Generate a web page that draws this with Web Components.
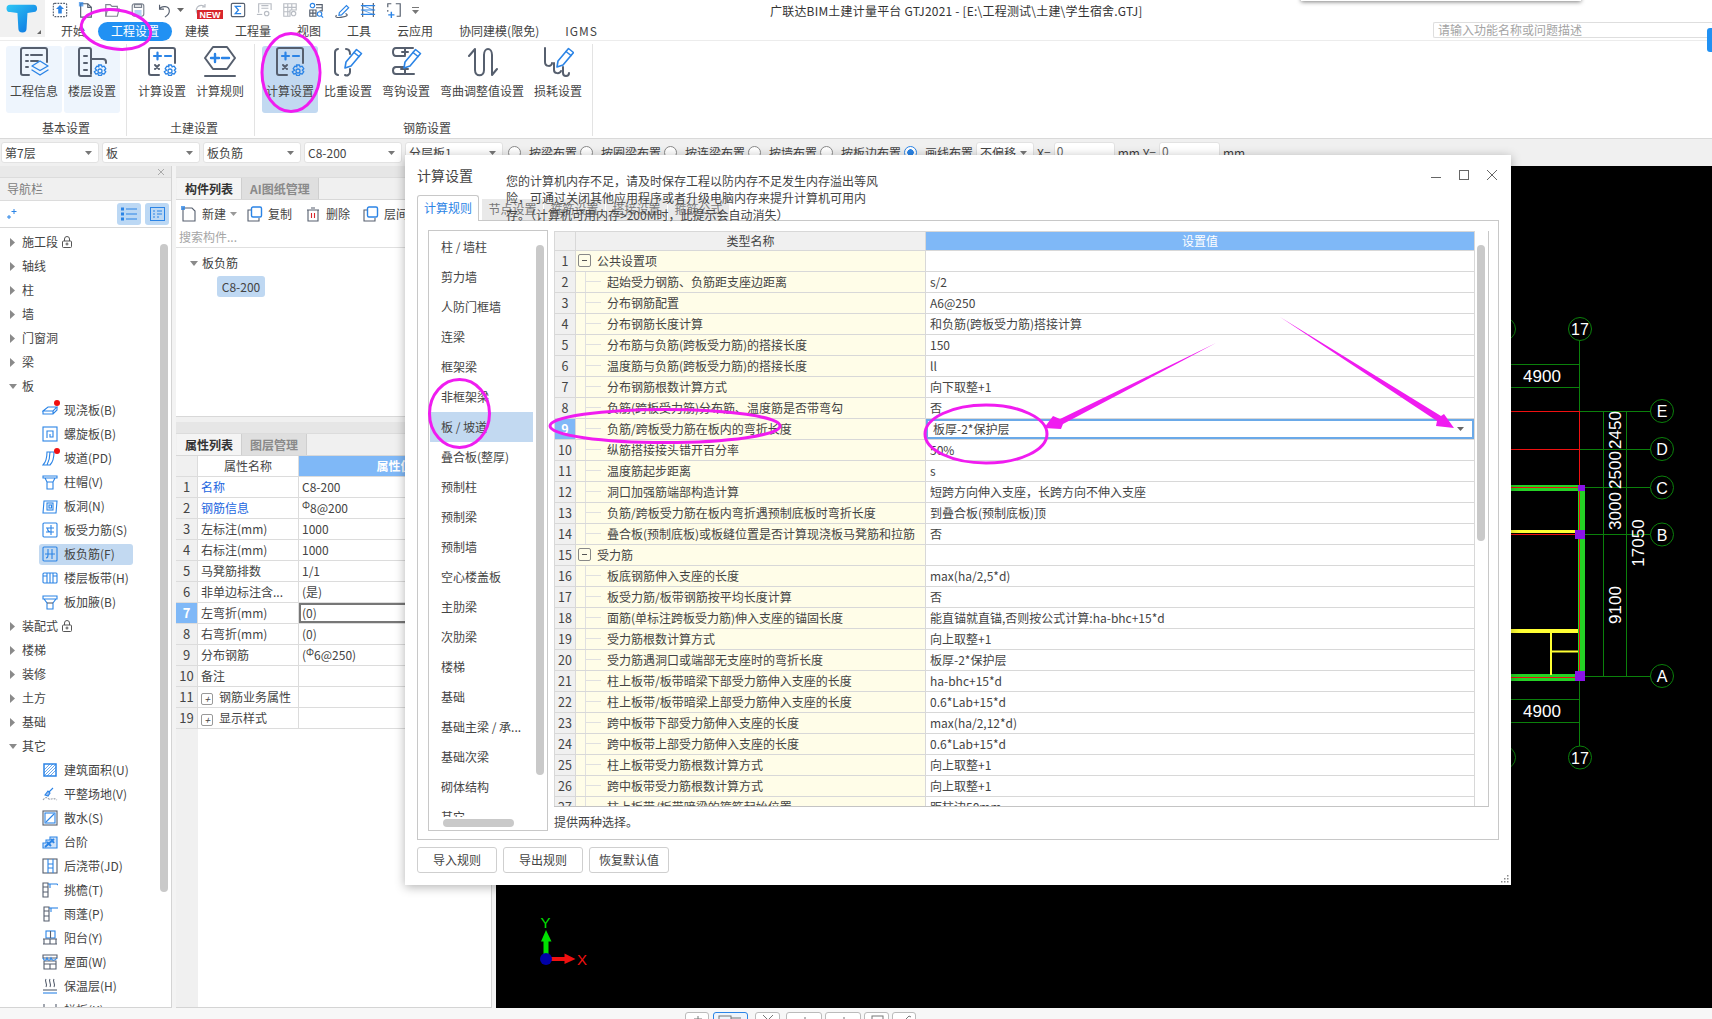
<!DOCTYPE html>
<html lang="zh-CN">
<head>
<meta charset="utf-8">
<title>GTJ2021</title>
<style>
html,body{margin:0;padding:0;width:1712px;height:1019px;overflow:hidden;background:#f3f3f3}
body{font:12px/16px "Noto Sans CJK SC","Noto Sans",sans-serif;color:#3f3f3f}
</style>
</head>
<body>
<gtj-app></gtj-app>
<script>
const B='#2b84e6',G='#565f6e',LG='#b9bdc4';
function el(name,css,render){
  customElements.define(name,class extends HTMLElement{
    constructor(){super();this.attachShadow({mode:'open'})}
    connectedCallback(){this.shadowRoot.innerHTML='<style>'+css+'</style>'+render(this)}
  });
}
const tri=(c='#888')=>`<svg width="7" height="4" viewBox="0 0 7 4"><path d="M0 0h7L3.500 4z" fill="${c}"/></svg>`;

/* ---------- quick access icons ---------- */
const q=(b)=>`<svg width="16" height="16" viewBox="0 0 18 18" fill="none" stroke="${G}" stroke-width="1.300">${b}</svg>`;
const QUICK=[
 q(`<rect x="1.500" y="1.500" width="15" height="15" rx="1.500" stroke-dasharray="2 1.200"/><path d="M9 3.500l4.500 4.500H11v5H7V8H4.500z" fill="${B}" stroke="none"/>`),
 q(`<path d="M3 2h8l4 4v11H3z"/><path d="M11 2v4h4"/><rect x="1" y="0" width="5" height="5" fill="${B}" stroke="none" opacity=".7"/>`),
 q(`<path d="M2 16V3h5l2 2h6v3" stroke="#7d8490"/><path d="M2 16l2-8h13l-2 8z" stroke="#7d8490"/>`),
 q(`<rect x="2.500" y="2" width="13" height="14" rx="2.500" stroke="#7d8490"/><path d="M5 3h8v3H5z" stroke="#7d8490"/><rect x="5" y="9" width="8" height="7" fill="#b6d4f4" stroke="none"/>`),
 q(`<path d="M4 3v5h5"/><path d="M4 8c2-4 11-4 11 2 0 3-2 5-5 7"/>`),
 `<span style="width:12px;margin-left:-3px;display:flex;justify-content:center">${tri('#666')}</span>`,
 `<span style="width:39px;display:flex;justify-content:flex-start;padding-left:8px;box-sizing:border-box"><svg width="14" height="14" viewBox="0 0 14 14" fill="none" stroke="${LG}" stroke-width="1.200"><path d="M11 4A5 5 0 1 0 12 9M11 1v3H8"/></svg></span>`,
 q(`<rect x="1.500" y="1.500" width="15" height="15" rx="1.500"/><path d="M12.500 5H6l3.500 4L6 13h6.500" stroke="${B}" stroke-width="1.500"/>`),
 q(`<path d="M3 12V2h14v7M6 4h8M6 7h8" stroke="${LG}"/><path d="M1 14h6" stroke="${LG}"/><circle cx="12" cy="13" r="2.500" stroke="${LG}"/>`),
 q(`<path d="M2 2h14v7H9v7H2zM2 6h14M2 11h7M6.500 2v14M11 2v7" stroke="${LG}"/><circle cx="13" cy="13" r="2.500" stroke="${LG}"/>`),
 q(`<path d="M2 9h7v7H2zM2 12.500h7M5.500 9v7M9 3h7v7h-3M9 6.500h7"/><circle cx="5" cy="4" r="2.500" stroke="${B}"/><circle cx="13" cy="13.500" r="2.500" stroke="${B}"/><path d="M15 15.500l2 2" stroke="${B}"/>`),
 q(`<path d="M3 15c-3 2 1 3 6 2s8-2 4-4" stroke="${G}"/><path d="M6 12l8-8 2.500 2.500-8 8-3 .5z" stroke="${B}"/>`),
 q(`<path d="M3 1v16M15 1v16" stroke="${G}"/><path d="M1 4h16M1 9h16M1 14h16" stroke="${B}"/><path d="M3 4l12 5M3 9l12 5" stroke="${B}" stroke-width=".8"/>`),
 q(`<path d="M2 6V2h4M11 2h5v14h-4M2 9v2" /><path d="M6 11v7M2.500 14.500h7" stroke="${B}" stroke-width="1.600"/>`),
];
el('quick-bar',`:host{display:flex;height:21px;align-items:center;position:relative;padding-bottom:1px;box-sizing:border-box}
 .c{width:26px;display:flex;justify-content:center;flex:none}
 .new{position:absolute;left:150px;top:10px;width:26px;height:9px;background:#d8262c;color:#fff;font:700 9px/10px "Liberation Sans",sans-serif;text-align:center}
 .more{width:16px;display:flex;flex-direction:column;align-items:center;gap:2px}
 .more b{display:block;width:7px;border-top:1px solid #777}`,
 ()=>QUICK.map(i=>i.startsWith('<span')?i:`<span class="c">${i}</span>`).join('')+`<span class="more"><b></b>${tri('#777')}</span><span class="new">NEW</span>`);

/* ---------- title + tabs ---------- */
el('tab-strip',`:host{display:flex;height:19px;align-items:flex-start;color:#444;margin-left:1px}
 span{padding:0 13px 1px;line-height:18px;white-space:nowrap}
 .on{background:#2191f3;color:#fff;border-radius:10px}
 .lat{letter-spacing:1px}`,
 ()=>['开始','工程设置','建模','工程量','视图','工具','云应用','协同建模(限免)','IGMS'].map((t,i)=>`<span class="${i==1?'on':i==8?'lat':''}">${t}</span>`).join(''));

el('gtj-header',`:host{display:flex;height:40px;border-bottom:1px solid #ececec;background:#fff;position:relative}
 .logo{width:45px;height:37px;background:#f1f1f1;position:relative;flex:none}
 .logo svg{display:block;margin:2px 0 0 5px}
 .corner{position:absolute;right:4px;bottom:3px;width:0;height:0;border-left:4px solid transparent;border-bottom:4px solid #666}
 .col{flex:1;padding-left:2px;min-width:0}
 .tabs{display:flex;align-items:center;height:19px;margin-top:1px}
 .search{margin-left:auto;width:279px;height:16px;box-sizing:border-box;border:1px solid #dedede;border-right:0;border-radius:2px 0 0 2px;color:#a4a4a4;padding-left:4px;line-height:14px;font-size:12px;margin-top:-3px}
 .title{position:absolute;left:770px;top:3px;white-space:nowrap;color:#333;font-size:12px;line-height:16px;letter-spacing:.2px}
 .pop{position:absolute;left:1301px;top:-6px;width:280px;height:7px;background:#fff;box-shadow:0 1px 4px rgba(0,0,0,.5)}
 .blue{position:absolute;right:0;top:28px;width:5px;height:24px;background:#2191f3;border-radius:3px 0 0 3px;z-index:3}`,
 ()=>`<div class="logo"><svg width="34" height="31" viewBox="0 0 36 34"><defs><linearGradient id="t" x1="0" y1="0" x2="1" y2="1"><stop offset="0" stop-color="#2fc7f5"/><stop offset="1" stop-color="#0a6fe0"/></linearGradient></defs><path d="M5 3h25a4 4 0 0 1 1 8l-7 1-1 17a4.500 4.500 0 0 1-9 0l-1-17-8-1a4 4 0 0 1 0-8z" fill="url(#t)"/></svg><i class="corner"></i></div>
 <div class="col"><quick-bar></quick-bar><div class="tabs"><tab-strip></tab-strip><div class="search">请输入功能名称或问题描述</div></div></div>
 <div class="title">广联达BIM土建计量平台 GTJ2021 - [E:\\工程测试\\土建\\学生宿舍.GTJ]</div><div class="pop"></div><i class="blue"></i>`);

/* ---------- ribbon ---------- */
const r=(b)=>`<svg width="32" height="32" viewBox="0 0 32 32" fill="none" stroke="${G}" stroke-width="2" stroke-linecap="round" stroke-linejoin="round">${b}</svg>`;
const gear=(x,y,s=1)=>`<g transform="translate(${x} ${y}) scale(${s})" stroke="${B}"><circle r="2" stroke-width="1.300"/><path stroke-width="1.300" d="M-1.500-6h3l.6 2 2-.8 1.700 2.500-1.500 1.500 1.500 1.500-1.700 2.500-2-.8-.6 2h-3l-.6-2-2 .8-1.700-2.500L-3.300-.8-4.800-2.300l1.700-2.500 2 .8z"/></g>`;
const pencil=(dx,dy)=>`<g transform="translate(${dx} ${dy})" stroke="${B}" stroke-width="1.600"><path d="M0 20l1-6L11.500 1.500l5 4L6 18z"/><path d="M9 4.500l5 4"/></g>`;
const calc=`<path d="M13 29H5a2 2 0 0 1-2-2V4a2 2 0 0 1 2-2h22a2 2 0 0 1 2 2v13"/><path d="M8 10h7M11.500 6.500v7M19 10h6" stroke="${B}" stroke-width="2.200"/><path d="M9 19l4 4M13 19l-4 4" stroke-width="2"/>`+gear(24,25);
const RI={
 info:r(`<path d="M11 29H5a2 2 0 0 1-2-2V4a2 2 0 0 1 2-2h22a2 2 0 0 1 2 2v12"/><path d="M8 9h2M13 9h11M8 15h2M13 15h7M8 21h2"/><path d="M22 15l8 5-8 4.500-8-4.500z" stroke="${B}" stroke-width="1.400"/><path d="M14 24l8 5 8-5" stroke="${B}" stroke-width="1.400"/>`),
 floor:r(`<path d="M5 30a2 2 0 0 1-2-2V4a2 2 0 0 1 2-2h8a2 2 0 0 1 2 2v24M15 30H5M8 10h3M8 17h3M8 24h3"/><path d="M15 13h12a3 3 0 0 1 3 3v1"/>`+gear(24,25)),
 calc:r(calc),
 rule:r(`<path d="M9 1h14l8 11-8 11H9L1 12z"/><path d="M7 12h8M11 8v8M18 12h7" stroke="${B}" stroke-width="2.400"/><path d="M1 30h30"/>`),
 weight:r(`<path d="M6 3a3.500 3.500 0 0 0-3 3.500v19A3.500 3.500 0 0 0 6 29"/><path d="M14 3c3 0 4 2 4 5M18 23v3c0 3-3 4-5 3"/>`+pencil(13,2)),
 hook:r(`<path d="M23 2H6c-4 0-4 8 0 8h9M15 2v7M12 6h6M14 21H6c-4 0-4 7 0 7h18M15 22v6M11 23h7"/>`+pencil(14,2)),
 bend:r(`<path d="M3 10l6-7v21c0 7 9 7 9 0V9c0-8 8-8 8 0v20l5-6"/>`),
 loss:r(`<path d="M3 2v14c0 5 7 5 7 1M12 17v7c0 4 6 4 7 1M21 21v6c0 4 6 4 6 0"/>`+pencil(15,1))
};
el('ribbon-btn',`:host{display:block;width:56px;height:67px;border-radius:3px;text-align:center;flex:none}
 :host([wide]){width:92px}
 :host([soft]){background:#eef5fd}
 :host([active]){background:#c2d9f1}
 .i{height:34px;padding-top:0;box-sizing:border-box;display:flex;justify-content:center}
 .t{margin-top:2px;white-space:nowrap;line-height:18px;color:#454545;font-size:12px}`,
 h=>`<div class="i">${RI[h.getAttribute('icon')]}</div><div class="t">${h.getAttribute('label')}</div>`);
el('ribbon-group',`:host{display:flex;flex-direction:column;border-right:1px solid #e3e3e3;box-sizing:border-box;height:92px;margin-top:3px;padding-top:2px}
 .b{display:flex;gap:2px;height:67px}
 .l{margin-top:8px;text-align:center;line-height:14px;color:#454545}`,
 h=>`<div class="b"><slot></slot></div><div class="l">${h.getAttribute('label')}</div>`);
el('gtj-ribbon',`:host{display:flex;height:98px;background:#fff;border-bottom:1px solid #d9d9d9;box-sizing:border-box}
 ribbon-group{flex:none}
 .g1{width:127px;padding-left:6px}.g2{width:128px;padding-left:7px}.g3{width:338px;padding-left:7px}`,
 ()=>`<ribbon-group class="g1" label="基本设置"><ribbon-btn soft icon="info" label="工程信息"></ribbon-btn><ribbon-btn soft icon="floor" label="楼层设置"></ribbon-btn></ribbon-group>
 <ribbon-group class="g2" label="土建设置"><ribbon-btn icon="calc" label="计算设置"></ribbon-btn><ribbon-btn icon="rule" label="计算规则"></ribbon-btn></ribbon-group>
 <ribbon-group class="g3" label="钢筋设置"><ribbon-btn active icon="calc" label="计算设置"></ribbon-btn><ribbon-btn icon="weight" label="比重设置"></ribbon-btn><ribbon-btn icon="hook" label="弯钩设置"></ribbon-btn><ribbon-btn wide icon="bend" label="弯曲调整值设置"></ribbon-btn><ribbon-btn icon="loss" label="损耗设置"></ribbon-btn></ribbon-group>`);

/* ---------- options toolbar ---------- */
el('combo-box',`:host{display:flex;align-items:center;justify-content:space-between;box-sizing:border-box;width:98px;height:21px;background:#fff;border:1px solid #e2e2e2;border-radius:3px;padding:0 6px 0 3px;flex:none;color:#444}`,
 h=>`<span>${h.getAttribute('text')}</span>${tri('#777')}`);
el('radio-opt',`:host{display:flex;align-items:center;flex:none;white-space:nowrap;color:#444}
 i{display:block;width:13px;height:13px;border:1px solid #888;border-radius:50%;box-sizing:border-box;margin-right:8px;background:#fff}
 :host([on]) i{border-color:#2b84e6;background:radial-gradient(circle,#2b84e6 0 3px,#fff 3.500px)}`,
 h=>`<i></i>${h.getAttribute('text')}`);
el('gtj-options',`:host{display:flex;align-items:center;height:27px;background:#f0f0f0;padding-left:1px;gap:3px;box-sizing:border-box}
 .n{width:61px;height:21px;background:#fff;border:1px solid #e2e2e2;border-radius:3px;box-sizing:border-box;padding-left:2px;flex:none;color:#666}
 .first{margin-left:2px}`,
 ()=>`<combo-box text="第7层"></combo-box><combo-box text="板"></combo-box><combo-box text="板负筋"></combo-box><combo-box text="C8-200"></combo-box><combo-box text="分层板1"></combo-box>
 ${['按梁布置','按圈梁布置','按连梁布置','按墙布置','按板边布置'].map((t,i)=>`<radio-opt class="${i?'':'first'}" text="${t}"></radio-opt>`).join('')}<radio-opt on text="画线布置"></radio-opt>
 <combo-box style="width:58px" text="不偏移"></combo-box><span>X=</span><span class="n">0</span><span>mm</span><span>Y=</span><span class="n">0</span><span>mm</span>`);

/* ---------- navigation tree ---------- */
const n=(b)=>`<svg width="16" height="16" viewBox="0 0 16 16" fill="none" stroke="${B}" stroke-width="1.100">${b}</svg>`;
const NI={
 slab:n(`<path d="M1 9h10l4-4H6z"/><path d="M1 9v3h10l4-4V5M11 9v3"/>`),
 spiral:n(`<rect x="1" y="1" width="14" height="14"/><path d="M5 12V5h6v6H8V8"/>`),
 ramp:n(`<path d="M1 15c3-3 4-8 4-13h7c0 5-1 10-4 13zM5 15c2-4 3-9 3-13" />`),
 cap:n(`<path d="M1 2h14v2H1zM3 4l2 4h6l2-4M5 8v7h6V8" />`),
 hole:n(`<path d="M2 3h13l-1 12H1z"/><rect x="5" y="5" width="6" height="7"/><rect x="7" y="7" width="2.500" height="3"/>`),
 rebar:n(`<rect x="1" y="1" width="14" height="14" rx="1"/><path d="M4 6h8M4 10h8M9 3v10M6 6c-1 2 0 3 2 4"/>`),
 neg:n(`<rect x="1" y="1" width="14" height="14" rx="1"/><path d="M3 8h10M6 3v6c0 2-1 3-2 3M10 3v10"/>`),
 band:n(`<rect x="1" y="3" width="14" height="10" rx="1"/><path d="M5 3v10M8 3v10M11 3v10M1 6h4M11 6h4"/>`),
 haunch:n(`<path d="M1 2h14v3H1zM2 5l3 4v6h6V9l3-4"/><path d="M5 9h6" stroke="${G}"/>`),
 area:n(`<rect x="2" y="2" width="12" height="12" stroke-width="1.500"/><path d="M2 8l6-6M2 11l9-9M2 14L14 2M5 14l9-9M8 14l6-6" stroke-width=".7"/>`),
 site:n(`<path d="M5 8l6-6" /><path d="M3 9l3 1 2-3-2-2z" fill="#9dbff0"/><path d="M1 14c3-4 4-2 6-1s4-2 8 1" stroke="#9aa1ab" stroke-dasharray="2 1"/>`),
 apron:n(`<rect x="1" y="1" width="14" height="14" stroke="${G}"/><rect x="3" y="3" width="10" height="10"/><path d="M4 12l8-8"/>`),
 step:n(`<path d="M1 14V9h3V6h4V3h7v11z" fill="#cfe2f9"/><path d="M3 13l9-8M5 8l4 4M9 5l3 4" stroke-width="2"/>`),
 post:n(`<rect x="1" y="1" width="14" height="14" stroke="${G}"/><path d="M6 1v14M11 1v14M6 6h5M6 10h5"/>`),
 eave:n(`<path d="M1 1h5v14H1zM1 5h5M1 10h5" stroke="${G}"/><path d="M6 2h9l1 1"/><path d="M8 2v4"/>`),
 canopy:n(`<path d="M2 1h5v14H2zM2 5h5M2 10h5" stroke="${G}"/><path d="M7 2h9"/><path d="M9 2v4"/>`),
 balcony:n(`<rect x="4" y="1" width="9" height="7"/><path d="M8.500 1v7M1 9h14M1 14h14M2 9v5M8 9v5M14 9v5" stroke="${G}"/>`),
 roof:n(`<path d="M1 1h14v3H1zM2 7h12v8H2zM2 10h12M8 10v5" stroke="${G}"/><path d="M1 4c1 3 3 3 4 0 1 3 3 3 4 0 1 3 4 3 6 0"/>`),
 insul:n(`<path d="M1 15h14"/><path d="M1 12h14" stroke="${G}"/><path d="M4 1c-2 3 2 4 0 8M8 1c-2 3 2 4 0 8M12 1c-2 3 2 4 0 8" stroke="${G}"/>`),
 rail:n(`<path d="M2 2v8h12V2" stroke="${G}"/>`)
};
const lock=`<svg width="10" height="12" viewBox="0 0 10 12" fill="none" stroke="#555" stroke-width="1"><path d="M2.500 5V3a2.500 2.500 0 0 1 5 0v2"/><rect x=".5" y="5" width="9" height="6.500" rx="1"/><circle cx="5" cy="8" r="1"/></svg>`;
const arrowR=`<svg width="5" height="9" viewBox="0 0 5 9"><path d="M0 0l5 4.500L0 9z" fill="#8a8a8a"/></svg>`;
const arrowD=`<svg width="8" height="5" viewBox="0 0 8 5"><path d="M0 0h8L4 5z" fill="#8a8a8a"/></svg>`;
el('nav-item',`:host{display:flex;align-items:center;height:24px;white-space:nowrap;color:#444}
 .a{width:22px;display:flex;justify-content:center;box-sizing:border-box;padding-left:3px;flex:none}
 .sp{width:22px;flex:none}
 .i{width:22px;height:16px;position:relative;margin-left:20px;flex:none}
 .d{position:absolute;left:12px;top:-2px;width:6px;height:6px;border-radius:50%;background:#f01010}
 .lab{display:flex;align-items:center;gap:4px}
 .sel{background:#c2d9f1;border-radius:3px;height:21px;display:flex;align-items:center;flex:none;width:94px;margin-left:17px}
 .sel .i{margin-left:3px}`,
 h=>{
  const t=h.getAttribute('text'),ic=h.getAttribute('icon');
  if(!ic){return `<span class="a">${h.hasAttribute('open')?arrowD:arrowR}</span><span class="lab">${t}${h.hasAttribute('lock')?lock:''}</span>`}
  const body=`<span class="i">${NI[ic]}${h.hasAttribute('dot')?'<i class="d"></i>':''}</span><span class="lab">${t}</span>`;
  return h.hasAttribute('sel')?`<span class="sp"></span><span class="sel">${body}</span>`:`<span class="sp"></span>${body}`;
 });
const NAV=[['施工段',0,'lock'],['轴线'],['柱'],['墙'],['门窗洞'],['梁'],['板',0,'open'],
 ['现浇板(B)','slab','dot'],['螺旋板(B)','spiral'],['坡道(PD)','ramp','dot'],['柱帽(V)','cap'],['板洞(N)','hole'],['板受力筋(S)','rebar'],['板负筋(F)','neg','sel'],['楼层板带(H)','band'],['板加腋(B)','haunch'],
 ['装配式',0,'lock'],['楼梯'],['装修'],['土方'],['基础'],['其它',0,'open'],
 ['建筑面积(U)','area'],['平整场地(V)','site'],['散水(S)','apron'],['台阶','step'],['后浇带(JD)','post'],['挑檐(T)','eave'],['雨蓬(P)','canopy'],['阳台(Y)','balcony'],['屋面(W)','roof'],['保温层(H)','insul'],['栏板(K)','rail']];
el('nav-panel',`:host{display:flex;flex-direction:column;width:172px;flex:none;background:#fff;border-right:1px solid #d4d4d4;box-sizing:border-box;border-bottom:1px solid #d4d4d4;position:relative;overflow:hidden}
 .strip{height:11px;background:#e9e9e9;display:flex;justify-content:flex-end;align-items:center;padding-right:6px;flex:none}
 .hd{line-height:22px;background:#f0f0f0;color:#7d7d7d;padding-left:7px;border-top:1px solid #dcdcdc;border-bottom:1px solid #dcdcdc;box-sizing:border-box;height:24px;flex:none}
 .tb{height:27px;display:flex;align-items:center;border-bottom:1px solid #d8d8d8;box-sizing:border-box;padding:0 2px 0 6px;gap:4px;flex:none}
 .btn{width:24px;height:22px;background:#bcd8f4;border-radius:3px;display:flex;align-items:center;justify-content:center}
 .list{padding-top:2px;flex:1;overflow:hidden}
 .sb{position:absolute;left:160px;top:78px;width:8px;height:648px;background:#c9c9c9;border-radius:4px}`,
 ()=>`<div class="strip"><svg width="8" height="8" viewBox="0 0 8 8" stroke="#aaa" fill="none"><path d="M1 1l6 6M7 1L1 7"/></svg></div><div class="hd">导航栏</div>
 <div class="tb"><svg width="12" height="12" viewBox="0 0 12 12" stroke="${B}" fill="none"><path d="M8 1v5M5.500 3.500h5M3 7v4M1 9h4"/></svg><span style="flex:1"></span>
 <span class="btn"><svg width="16" height="14" viewBox="0 0 16 14" stroke="${B}" fill="none"><path d="M5 2h11M5 7h11M5 12h11"/><rect x="0.500" y="1" width="2" height="2"/><rect x="0.500" y="6" width="2" height="2"/><rect x="0.500" y="11" width="2" height="2"/></svg></span>
 <span class="btn"><svg width="15" height="14" viewBox="0 0 15 14" stroke="${B}" fill="none"><rect x=".5" y=".5" width="14" height="13"/><path d="M3 4h2M7 4h5M3 7h2M7 7h5M3 10h2M7 10h2"/></svg></span></div>
 <div class="list">${NAV.map(([t,i,f])=>`<nav-item text="${t}" ${i?`icon="${i}"`:''} ${f||''}></nav-item>`).join('')}</div><i class="sb"></i>`);

/* ---------- component list panel ---------- */
el('panel-tabs',`:host{display:block;flex:none}
 .strip{height:11px;background:#e6e6e6}
 .row{display:flex;height:23px;background:#f0f0f0;border-bottom:1px solid #d8d8d8;box-sizing:border-box;border-top:1px solid #dcdcdc}
 span{display:block;padding:0 8px;line-height:21px;border-right:1px solid #cfcfcf;background:#dfdfdf;color:#8a8a8a;font-weight:700;font-size:12px}
 span:first-child{background:#f4f4f4;color:#333;margin-left:1px}`,
 h=>`<div class="strip"></div><div class="row">${h.getAttribute('tabs').split(',').map(t=>`<span>${t}</span>`).join('')}</div>`);
const tool=(b)=>`<svg width="16" height="16" viewBox="0 0 16 16" fill="none" stroke="${G}" stroke-width="1.100">${b}</svg>`;
const dup=tool(`<path d="M4 4H1v11h11v-3"/><rect x="4.500" y="1" width="10" height="10" rx="1.500" stroke="${B}" stroke-width="1.400"/>`);
el('comp-list',`:host{display:flex;flex-direction:column;height:251px;background:#fff;border-bottom:1px solid #d8d8d8;box-sizing:border-box;flex:none}
 .tb{display:flex;align-items:center;height:27px;padding-left:5px;flex:none;white-space:nowrap;color:#444}
 .tb svg{flex:none}.tb b{font-weight:400;margin:0 13px 0 5px}
 .s{height:20px;border-bottom:1px solid #e0e0e0;color:#a6a6a6;padding-left:3px;line-height:20px;flex:none}
 .g{display:flex;align-items:center;gap:4px;margin:5px 0 0 14px;height:20px}
 .c{margin:3px 0 0 41px;width:48px;height:21px;line-height:21px;background:#bfd8f2;border-radius:3px;text-align:center;color:#444}`,
 ()=>`<panel-tabs tabs="构件列表,AI图纸管理"></panel-tabs>
 <div class="tb">${tool(`<path d="M5 2H2v13h12V5l-3-3H5"/><rect x="0" y="0" width="4" height="4" fill="${B}" stroke="none" opacity=".75"/>`)}<b style="margin-right:4px">新建</b>${tri('#999')}<span style="width:10px"></span>${dup}<b>复制</b>${tool(`<path d="M2 4h12M6 2h4M3 4v11h10V4"/><path d="M6.500 7v5M9.500 7v5" stroke="#d8262c"/>`)}<b>删除</b>${dup}<b>层间复制</b></div>
 <div class="s">搜索构件...</div><div class="g">${arrowD}<span>板负筋</span></div><div class="c">C8-200</div>`);

/* ---------- property table ---------- */
const PROPS=[['1','名称','C8-200','b'],['2','钢筋信息','<sup>Φ</sup>8@200','b'],['3','左标注(mm)','1000'],['4','右标注(mm)','1000'],['5','马凳筋排数','1/1'],['6','非单边标注含...','(是)'],['7','左弯折(mm)','(0)','s'],['8','右弯折(mm)','(0)'],['9','分布钢筋','(<sup>Φ</sup>6@250)'],['10','备注',''],['11','钢筋业务属性','','p'],['19','显示样式','','p']];
el('prop-table',`:host{display:flex;flex-direction:column;flex:1;background:#fff;min-height:0;color:#444}
 .body{flex:1;background:linear-gradient(90deg,#f0f0f0 22px,#fff 22px)}
 .r{display:grid;grid-template-columns:22px 101px 1fr;height:21px;box-sizing:border-box;border-bottom:1px solid #dcdcdc;line-height:20px}
 .r>*{border-right:1px solid #dcdcdc;padding:0 3px;white-space:nowrap;overflow:hidden;box-sizing:border-box}
 .n{text-align:center;background:#f0f0f0;padding:0!important;font-size:13px}
 .hd .v{background:#7fb8f7;color:#fff;text-align:center;font-weight:700;padding:0}
 .hd .k{text-align:center}
 .blue{color:#2266e0}
 .cur{background:#7fb8f7;color:#fff;font-weight:700}
 .sel{box-shadow:inset 0 0 0 2px #777}
 sup{font-size:10px;line-height:0;vertical-align:4px}
 .p{display:inline-flex;width:12px;height:12px;border:1px solid #999;border-radius:2px;box-sizing:border-box;align-items:center;justify-content:center;margin-right:6px;font-size:10px;line-height:10px;vertical-align:-1px}`,
 ()=>`<div class="r hd" style="height:21px"><span class="n"></span><span class="k">属性名称</span><span class="v">属性值</span></div><div class="body">${PROPS.map(([a,k,v,f])=>`<div class="r"><span class="n ${f=='s'?'cur':''}">${a}</span><span class="${f=='b'?'blue':''}">${f=='p'?'<i class="p">+</i>':''}${k}</span><span class="${f=='s'?'sel':''}">${v}</span></div>`).join('')}</div>`);
el('mid-panel',`:host{display:flex;flex-direction:column;width:316px;flex:none;border-right:1px solid #d4d4d4;border-bottom:1px solid #d4d4d4;box-sizing:border-box;background:#f0f0f0;min-height:0}
 .gap{height:5px;flex:none}`,
 ()=>`<comp-list></comp-list><div class="gap"></div><panel-tabs tabs="属性列表,图层管理"></panel-tabs><prop-table></prop-table>`);

/* ---------- CAD canvas ---------- */
el('cad-canvas',`:host{display:block;flex:1;background:#000;min-width:0;overflow:hidden}
 svg{display:block}
 text{font-family:"Liberation Sans",sans-serif;fill:#fff;text-anchor:middle}`,
 ()=>{
 const GR='#0b800b',W='#25d225',Y='#ffff33',R='#f01010',P='#8a14e8';
 const c=(x,y,t)=>`<circle cx="${x}" cy="${y}" r="11.500" fill="none" stroke="${GR}"/><text x="${x}" y="${y+6}" font-size="16">${t}</text>`;
 const v=(x,y,t)=>`<text transform="translate(${x} ${y}) rotate(-90)" font-size="17">${t}</text>`;
 const hl=(x1,x2,y,col=GR,w=1)=>`<path d="M${x1} ${y}H${x2}" stroke="${col}" stroke-width="${w}"/>`;
 const vl=(x,y1,y2,col=GR,w=1)=>`<path d="M${x} ${y1}V${y2}" stroke="${col}" stroke-width="${w}"/>`;
 return `<svg width="1216" height="842" viewBox="496 166 1216 842">
 ${c(1504,329,'')}${c(1504,757.500,'')}
 ${vl(1579.500,341,746)}
 ${hl(1500,1580,364.500)}${hl(1500,1580,387.500)}${hl(1500,1580,699.500)}${hl(1500,1580,722.500)}
 <text x="1542" y="382" font-size="17">4900</text><text x="1542" y="717" font-size="17">4900</text>
 ${c(1580,329,'17')}${c(1580,757.500,'17')}
 ${hl(1500,1579,411.500,R)}${hl(1500,1579,449.500,R)}
 ${hl(1579,1650,411.500)}${hl(1579,1650,449.500)}${hl(1585,1650,487.500)}${hl(1585,1650,534.500)}${hl(1585,1650,676.500)}
 ${vl(1603.500,411,676)}${vl(1626.500,411,676)}
 ${v(1621,430,'2450')}${v(1621,470,'2500')}${v(1621,511,'3000')}${v(1621,605,'9100')}${v(1644,543,'17050')}
 <rect x="1500" y="485" width="80" height="6" fill="${W}"/><rect x="1500" y="674" width="80" height="7" fill="${W}"/><rect x="1578" y="485" width="7" height="196" fill="${W}"/>
 ${hl(1500,1580,487.500,R)}${hl(1500,1580,677.500,R)}${vl(1579.500,411,680,R)}
 ${hl(1500,1575,531.500,Y,3)}${hl(1500,1580,534.500,R)}${hl(1500,1578,631,Y,4)}${vl(1551,632,675,Y,2)}${hl(1551,1578,651.500,Y,2)}
 <rect x="1578" y="485" width="7" height="6" fill="${P}"/><rect x="1575" y="530" width="10" height="9" fill="${P}"/><rect x="1575" y="671" width="10" height="10" fill="${P}"/>
 ${c(1662,411,'E')}${c(1662,449,'D')}${c(1662,487.500,'C')}${c(1662,534.500,'B')}${c(1662,676,'A')}
 <path d="M543.500 960V941.500H541L546 930L551.500 941.500H548.500V960z" fill="#00e000"/>
 <path d="M546 957H564.500V953.500L575.500 959L564.500 964V961H546z" fill="#f01010"/>
 <circle cx="546" cy="959" r="6" fill="#0000a8"/>
 <text x="545.500" y="928" font-size="15" style="fill:#00e000">Y</text><text x="582" y="964.500" font-size="15" style="fill:#f01010">X</text>
 </svg>`;
 });

/* ---------- status bar ---------- */
const st=[
 [24,4,'<path d="M12 3v5M8 6h8"/>'],
 [35,7,'<rect x="5" y="3" width="12" height="6"/><path d="M17 5h10"/>',1],
 [25,6,'<path d="M7 2l5 5 5-5"/>'],
 [36,3,'<path d="M18 4v5M14 7h8"/>'],
 [36,3,'<path d="M18 4v5M14 7h8"/>'],
 [25,3,'<rect x="7" y="3" width="11" height="8"/>'],
 [24,0,'<path d="M10 9l6-6 2 1"/>']
];
el('gtj-status',`:host{display:flex;height:11px;background:#f7f7f7;padding:4px 0 0 685px;box-sizing:border-box;overflow:hidden;align-items:flex-start}
 i{display:block;height:14px;box-sizing:border-box;border:1px solid #bbb;border-radius:3px;background:#fff;flex:none}
 i svg{display:block}
 .on{border-color:#2b84e6;background:#eef5fc}`,
 ()=>st.map(([w,m,p,o])=>`<i class="${o?'on':''}" style="width:${w}px;margin-right:${m}px"><svg width="${w-2}" height="12" viewBox="0 0 ${w-2} 12" fill="none" stroke="#777">${p}</svg></i>`).join(''));

/* ---------- settings dialog ---------- */
const LIST=['柱 / 墙柱','剪力墙','人防门框墙','连梁','框架梁','非框架梁','板 / 坡道','叠合板(整厚)','预制柱','预制梁','预制墙','空心楼盖板','主肋梁','次肋梁','楼梯','基础','基础主梁 / 承...','基础次梁','砌体结构','其它'];
el('rule-list',`:host{display:block;width:120px;height:601px;border:1px solid #c8c8c8;box-sizing:border-box;position:relative;flex:none;overflow:hidden;background:#fff}
 .in{height:585px;overflow:hidden;padding:1px 0 0 1px}
 div.i{height:30px;line-height:30px;padding-left:11px;width:103px;box-sizing:border-box;white-space:nowrap;color:#444}
 .on{background:#c2d9f1}
 .v{position:absolute;left:107px;top:14px;width:8px;height:530px;background:#c9c9c9;border-radius:4px}
 .h{position:absolute;left:14px;top:588px;width:71px;height:8px;background:#c9c9c9;border-radius:4px}`,
 ()=>`<div class="in">${LIST.map((t,i)=>`<div class="i ${i==6?'on':''}">${t}</div>`).join('')}</div><i class="v"></i><i class="h"></i>`);

const RULES=[['公共设置项',null],['起始受力钢筋、负筋距支座边距离','s/2'],['分布钢筋配置','A6@250'],['分布钢筋长度计算','和负筋(跨板受力筋)搭接计算'],['分布筋与负筋(跨板受力筋)的搭接长度','150'],['温度筋与负筋(跨板受力筋)的搭接长度','ll'],['分布钢筋根数计算方式','向下取整+1'],['负筋(跨板受力筋)分布筋、温度筋是否带弯勾','否'],['负筋/跨板受力筋在板内的弯折长度','板厚-2*保护层'],['纵筋搭接接头错开百分率','50%'],['温度筋起步距离','s'],['洞口加强筋端部构造计算','短跨方向伸入支座，长跨方向不伸入支座'],['负筋/跨板受力筋在板内弯折遇预制底板时弯折长度','到叠合板(预制底板)顶'],['叠合板(预制底板)或板缝位置是否计算现浇板马凳筋和拉筋','否'],['受力筋',null],['板底钢筋伸入支座的长度','max(ha/2,5*d)'],['板受力筋/板带钢筋按平均长度计算','否'],['面筋(单标注跨板受力筋)伸入支座的锚固长度','能直锚就直锚,否则按公式计算:ha-bhc+15*d'],['受力筋根数计算方式','向上取整+1'],['受力筋遇洞口或端部无支座时的弯折长度','板厚-2*保护层'],['柱上板带/板带暗梁下部受力筋伸入支座的长度','ha-bhc+15*d'],['柱上板带/板带暗梁上部受力筋伸入支座的长度','0.6*Lab+15*d'],['跨中板带下部受力筋伸入支座的长度','max(ha/2,12*d)'],['跨中板带上部受力筋伸入支座的长度','0.6*Lab+15*d'],['柱上板带受力筋根数计算方式','向上取整+1'],['跨中板带受力筋根数计算方式','向上取整+1'],['柱上板带/板带暗梁的箍筋起始位置','距柱边50mm']];
el('rule-table',`:host{display:block;height:576px;border-bottom:1px solid #c4c4c4;border-right:1px solid #c8c8c8;box-sizing:border-box;overflow:hidden;position:relative;background:#fff;color:#444}
 .r{display:grid;grid-template-columns:22px 350px 549px;height:21px;box-sizing:border-box;width:921px;line-height:20px}
 .r>*{border-right:1px solid #d8d8d8;border-bottom:1px solid #d8d8d8;box-sizing:border-box;white-space:nowrap;overflow:hidden}
 .hd{height:20px;line-height:18px}
 .hd>*{background:#f0f0f0;text-align:center;border-top:1px solid #d8d8d8}
 .hd .v{background:#7fb8f7;color:#fff;font-weight:400}
 .n{background:#f0f0f0;text-align:center;border-left:1px solid #d8d8d8;font-size:12.500px}
 .k{background:#fffde8;position:relative;padding-left:31px}
 .k.g{padding-left:21px}
 .k:not(.g)::before{content:"";position:absolute;left:9px;top:0;height:20px;width:16px;border-left:1px solid #e0e0e0;box-sizing:border-box}
 .k:not(.g)::after{content:"";position:absolute;left:9px;top:9px;width:16px;border-top:1px solid #e0e0e0}
 .m{position:absolute;left:2px;top:3px;width:13px;height:13px;border:1px solid #888;border-radius:2px;box-sizing:border-box;display:flex;align-items:center;justify-content:center}
 .m::after{content:"";width:5px;border-top:1px solid #555}
 .val{padding-left:4px;background:#fff}
 .cur{background:#7fb8f7;color:#fff;font-weight:700}
 .edit{box-shadow:inset 0 0 0 2px #6aa9e8;padding-left:7px;padding-right:10px;display:flex;justify-content:space-between;align-items:center}
 .sb{position:absolute;left:923px;top:14px;width:8px;height:296px;background:#c9c9c9;border-radius:4px}`,
 ()=>`<div class="r hd"><span class="n"></span><span>类型名称</span><span class="v">设置值</span></div>${RULES.map(([k,v],i)=>`<div class="r"><span class="n ${i==8?'cur':''}">${i+1}</span><span class="k ${v===null?'g':''}">${v===null?'<i class="m"></i>':''}${k}</span><span class="val ${i==8?'edit':''}">${i==8?`<span>${v}</span>${tri('#666')}`:(v||'')}</span></div>`).join('')}<i class="sb"></i>`);

el('flat-btn',`:host{display:block;width:80px;height:26px;line-height:24px;box-sizing:border-box;text-align:center;border:1px solid #cfcfcf;border-radius:3px;color:#444;background:#fff}`,()=>`<slot></slot>`);
el('settings-dialog',`:host{display:block;position:absolute;left:405px;top:155px;width:1106px;height:730px;background:#fff;box-shadow:0 2px 10px rgba(0,0,0,.3);padding:0 12px;box-sizing:border-box}
 .tt{height:40px;display:flex;align-items:center;justify-content:space-between;font-size:14px;color:#444}
 .ctl{display:flex;gap:16px;align-items:center;margin-right:1px}
 .tabs{display:flex;height:26px;align-items:flex-end;position:relative}
 .t{height:21px;line-height:20px;background:#e9e9e9;width:62px;text-align:center;color:#777;border-right:1px solid #fff;box-sizing:border-box;margin-bottom:1px;flex:none}
 .t.on{height:26px;line-height:24px;width:62px;background:#fff;color:#2b84e6;border:1px solid #c8c8c8;border-bottom:0;border-radius:3px 3px 0 0;margin:0 3px 0 0;position:relative;z-index:1}
 .pane{height:620px;border:1px solid #c8c8c8;box-sizing:border-box;padding:9px 0 0 10px;display:flex;gap:6px;margin-top:-1px}
 .right{width:935px;flex:none;padding-top:1px}
 .desc{margin-top:7px;color:#444;line-height:16px}
 .foot{display:flex;gap:6px;margin-top:7px}
 .note{position:absolute;left:101px;top:17px;line-height:17px;white-space:nowrap;color:#444;z-index:2}
 .grip{position:absolute;right:2px;bottom:2px}`,
 ()=>`<div class="tt"><span>计算设置</span><span class="ctl">
  <svg width="12" height="12" viewBox="0 0 12 12" stroke="#666" fill="none"><path d="M1 8.500h10"/></svg>
  <svg width="12" height="12" viewBox="0 0 12 12" stroke="#666" fill="none"><rect x="1.500" y="1.500" width="9" height="9"/></svg>
  <svg width="12" height="12" viewBox="0 0 12 12" stroke="#666" fill="none"><path d="M1 1l10 10M11 1L1 11"/></svg></span></div>
 <div class="tabs"><span class="t on">计算规则</span><span class="t">节点设置</span><span class="t">箍筋设置</span><span class="t">搭接设置</span><span class="t">箍筋公式</span></div>
 <div class="pane"><rule-list></rule-list><div class="right"><rule-table></rule-table><div class="desc">提供两种选择。</div></div></div>
 <div class="foot"><flat-btn>导入规则</flat-btn><flat-btn>导出规则</flat-btn><flat-btn>恢复默认值</flat-btn></div>
 <div class="note">您的计算机内存不足，请及时保存工程以防内存不足发生内存溢出等风<br>险，可通过关闭其他应用程序或者升级电脑内存来提升计算机可用内<br>存。（计算机可用内存>200M时，此提示会自动消失）</div>
 <svg class="grip" width="9" height="9" viewBox="0 0 9 9" fill="#888"><rect x="7" y="1" width="1.500" height="1.500"/><rect x="4" y="4" width="1.500" height="1.500"/><rect x="7" y="4" width="1.500" height="1.500"/><rect x="1" y="7" width="1.500" height="1.500"/><rect x="4" y="7" width="1.500" height="1.500"/><rect x="7" y="7" width="1.500" height="1.500"/></svg>`);

/* ---------- magenta hand annotations ---------- */
el('markup-layer',`:host{position:absolute;left:0;top:0;width:1712px;height:1019px;pointer-events:none;z-index:5}svg{display:block}`,
 ()=>`<svg width="1712" height="1019" viewBox="0 0 1712 1019" fill="none" stroke="#f01cf0" stroke-width="3">
 <ellipse cx="116" cy="29.500" rx="35" ry="19.500" transform="rotate(8 116 29.500)"/>
 <ellipse cx="291" cy="72.500" rx="29" ry="39"/>
 <ellipse cx="459.500" cy="413.500" rx="30" ry="34"/>
 <ellipse cx="665" cy="426" rx="115" ry="16.500"/>
 <ellipse cx="986" cy="434" rx="61" ry="29"/>
 <polygon fill="#f01cf0" stroke="none" points="1216,343 1060,419 1053,416 1044,428 1061,429 1063,424"/>
 <polygon fill="#f01cf0" stroke="none" points="1280,317 1441,416 1444,414 1454,428 1436,426 1437,421"/>
 </svg>`);

/* ---------- shell ---------- */
el('gtj-app',`:host{display:flex;flex-direction:column;width:1712px;height:1019px;position:relative;overflow:hidden}
 .main{display:flex;flex:1;gap:4px;min-height:0}`,
 ()=>`<gtj-header></gtj-header><gtj-ribbon></gtj-ribbon><gtj-options></gtj-options>
 <div class="main"><nav-panel></nav-panel><mid-panel></mid-panel><cad-canvas></cad-canvas></div><gtj-status></gtj-status>
 <settings-dialog></settings-dialog><markup-layer></markup-layer>`);
</script>
</body>
</html>
